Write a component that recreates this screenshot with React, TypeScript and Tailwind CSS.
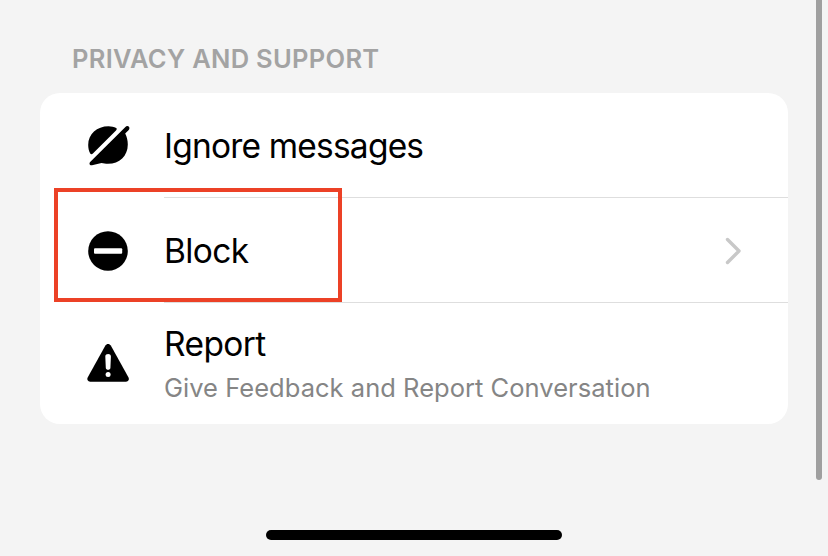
import type { ReactNode } from "react";

function IgnoreIcon() {
  return (
    <svg width="60" height="60" viewBox="0 0 60 60" aria-hidden="true">
      <path d="M36.2 13.1C34 11.9 31.4 11.2 28.5 11.2C17 11.2 8.2 19 8.2 30C8.2 33 8.9 36 10.1 38.3C10.8 39.6 12 39.4 12.9 38.5L36 15.4C36.9 14.5 37 13.6 36.2 13.1Z" />
      <path d="M45.4 11.9C46.7 10.6 48.5 11 49.1 12.1C49.7 13.2 49.4 14.4 48.5 15.3L45.2 18.6C46.9 22 47.8 25.5 47.8 29.5C47.8 41 39.5 48.8 28 48.8C25.5 48.8 23.5 48.4 21.5 48.1L12 50.2C10.5 50.5 9.4 49.6 9.5 48.4C9.5 47.8 9.9 47.3 10.4 46.8Z" />
    </svg>
  );
}

function BlockIcon() {
  return (
    <svg width="60" height="60" viewBox="0 0 60 60" aria-hidden="true">
      <circle cx="28" cy="31" r="19.8" />
      <rect x="14" y="28.2" width="28.2" height="5.6" rx="1" fill="white" />
    </svg>
  );
}

function ReportIcon() {
  return (
    <svg width="60" height="60" viewBox="0 0 60 60" aria-hidden="true">
      <path d="M25.4 10.5C26.6 8.4 29.6 8.4 30.8 10.5L48.4 42.3C49.6 44.6 48.3 46.7 46 46.7H10.2C7.9 46.7 6.6 44.6 7.8 42.3Z" />
      <path d="M25.3 21.4C25.3 18.3 30.9 18.3 30.9 21.4L30.4 33C30.3 35.4 25.9 35.4 25.8 33Z" fill="white" />
      <circle cx="28.1" cy="39.4" r="2.5" fill="white" />
    </svg>
  );
}

function Row({ icon, children }: { icon: ReactNode; children: ReactNode }) {
  return (
    <div className="flex h-[105px] pl-10">
      <div className="w-[84px] shrink-0 pt-[22px]">{icon}</div>
      <div className="flex h-[105px] flex-1 items-center justify-between border-b border-[#dedede] pt-[2px] pr-[46px]">
        {children}
      </div>
    </div>
  );
}

export default function App() {
  return (
    <main className="relative h-[556px] w-[828px] overflow-hidden bg-[#f4f4f4] px-10 pt-[43px] font-['Inter','Liberation_Sans',sans-serif] text-black">
      <h2 className="h-[50px] pl-8 text-[25.5px] leading-[32px] font-semibold tracking-[0.3px] whitespace-nowrap text-[#a3a3a3]">
        PRIVACY AND SUPPORT
      </h2>
      <section className="relative h-[331px] rounded-[20px] bg-white">
        <Row icon={<IgnoreIcon />}>
          <span className="text-[33.5px] leading-[40px] tracking-[-0.8px] whitespace-nowrap">Ignore messages</span>
        </Row>
        <Row icon={<BlockIcon />}>
          <span className="text-[33.5px] leading-[40px] tracking-[-0.65px] whitespace-nowrap">Block</span>
          <svg width="18" height="28" viewBox="0 0 18 28" fill="none" stroke="#c8c8c8" strokeWidth="3.4" strokeLinecap="round" strokeLinejoin="round" aria-hidden="true">
            <path d="M3.5 2.5L15 14L3.5 25.5" />
          </svg>
        </Row>
        <div className="flex h-[121px] pl-10">
          <div className="w-[84px] shrink-0 pt-[32px]"><ReportIcon /></div>
          <div className="pt-[21px] whitespace-nowrap">
            <div className="text-[33.5px] leading-[40px] tracking-[-0.6px]">Report</div>
            <div className="mt-[8px] text-[25.5px] leading-[32px] tracking-[0.03px] text-[#858585]">
              Give Feedback and Report Conversation
            </div>
          </div>
        </div>
        <div className="absolute top-[95px] left-[14px] h-[114px] w-[288px] border-4 border-[#ec4126]" />
      </section>
      <div className="absolute top-[-10px] left-[816px] h-[490px] w-[6px] rounded-full bg-[#9f9f9f]" />
      <div className="absolute top-[530px] left-[266px] h-[10px] w-[296px] rounded-full bg-black" />
    </main>
  );
}
